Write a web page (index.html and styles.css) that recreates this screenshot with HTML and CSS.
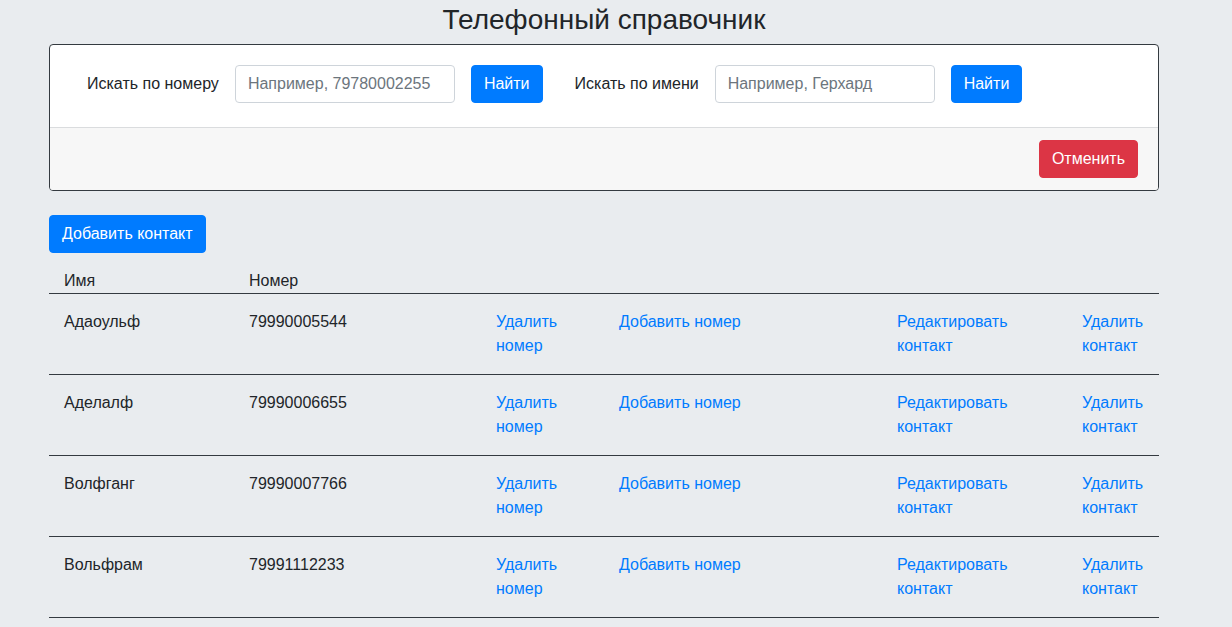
FILE: index.html
```html
<!DOCTYPE html>
<html lang="ru">
<head>
<meta charset="utf-8">
<title>Телефонный справочник</title>
<link rel="stylesheet" href="styles.css">
</head>
<body>
<div class="container">
  <h1 class="title">Телефонный справочник</h1>
  <div class="card">
    <div class="card-body">
      <label class="search-label first">Искать по номеру</label>
      <input class="input" type="text" placeholder="Например, 79780002255">
      <button class="btn btn-primary">Найти</button>
      <label class="search-label second">Искать по имени</label>
      <input class="input" type="text" placeholder="Например, Герхард">
      <button class="btn btn-primary">Найти</button>
    </div>
    <div class="card-footer">
      <button class="btn btn-danger">Отменить</button>
    </div>
  </div>
  <div class="actions">
    <button class="btn btn-primary">Добавить контакт</button>
  </div>
  <table class="contacts">
    <colgroup>
      <col class="c-name"><col class="c-num"><col class="c-del"><col class="c-add"><col class="c-edit"><col class="c-rm">
    </colgroup>
    <thead>
      <tr><th>Имя</th><th>Номер</th><th></th><th></th><th></th><th></th></tr>
    </thead>
    <tbody>
      <tr><td>Адаоульф</td><td>79990005544</td><td><a href="#">Удалить номер</a></td><td><a href="#">Добавить номер</a></td><td><a href="#">Редактировать контакт</a></td><td><a href="#">Удалить контакт</a></td></tr>
      <tr><td>Аделалф</td><td>79990006655</td><td><a href="#">Удалить номер</a></td><td><a href="#">Добавить номер</a></td><td><a href="#">Редактировать контакт</a></td><td><a href="#">Удалить контакт</a></td></tr>
      <tr><td>Волфганг</td><td>79990007766</td><td><a href="#">Удалить номер</a></td><td><a href="#">Добавить номер</a></td><td><a href="#">Редактировать контакт</a></td><td><a href="#">Удалить контакт</a></td></tr>
      <tr><td>Вольфрам</td><td>79991112233</td><td><a href="#">Удалить номер</a></td><td><a href="#">Добавить номер</a></td><td><a href="#">Редактировать контакт</a></td><td><a href="#">Удалить контакт</a></td></tr>
    </tbody>
  </table>
</div>
</body>
</html>
```
FILE: styles.css
```css
* { box-sizing: border-box; }
html, body { margin: 0; }
body {
  background: #e9ecef;
  color: #212529;
  font-family: "Liberation Sans", Arial, sans-serif;
  font-size: 16px;
  line-height: 1.5;
  padding-right: 24px;
}
.container {
  width: 1110px;
  margin: 0 auto;
}
.title {
  margin: 0;
  padding-top: 1px;
  text-align: center;
  font-size: 28px;
  font-weight: 400;
  line-height: 38px;
  height: 44px;
}
.card {
  background: #fff;
  border: 1px solid #343a40;
  border-radius: 4px;
  overflow: hidden;
}
.card-body {
  display: flex;
  align-items: center;
  padding: 20px 20px 24px 37px;
  border-bottom: 1px solid #dadcde;
}
.search-label { margin-right: 16px; }
.search-label.second { margin-left: 32px; }
.input {
  width: 220px;
  height: 38px;
  border: 1px solid #ced4da;
  border-radius: 4px;
  padding: 6px 12px;
  font: inherit;
  color: #495057;
  margin-right: 16px;
}
.input::placeholder { color: #6c757d; opacity: 1; }
.card-footer {
  background: #f7f7f7;
  padding: 12px 20px;
  display: flex;
  justify-content: flex-end;
}
.btn {
  height: 38px;
  padding: 6px 12px;
  border: 1px solid transparent;
  border-radius: 4px;
  font: inherit;
  line-height: 24px;
  color: #fff;
  cursor: pointer;
}
.btn-primary { background: #007bff; border-color: #007bff; }
.btn-danger { background: #dc3545; border-color: #dc3545; }
.actions { padding-top: 24px; }
.contacts {
  width: 100%;
  border-collapse: collapse;
  table-layout: fixed;
  margin-top: 3px;
}
.c-name { width: 185px; }
.c-num { width: 247px; }
.c-del { width: 123px; }
.c-add { width: 278px; }
.c-edit { width: 185px; }
.c-rm { width: 92px; }
.contacts th {
  text-align: left;
  font-weight: 400;
  padding: 13px 15px 0;
  border-bottom: 1px solid #343a40;
}
.contacts td {
  vertical-align: top;
  padding: 16px 15px;
  border-bottom: 1px solid #343a40;
}
.contacts a {
  color: #007bff;
  text-decoration: none;
}
```
